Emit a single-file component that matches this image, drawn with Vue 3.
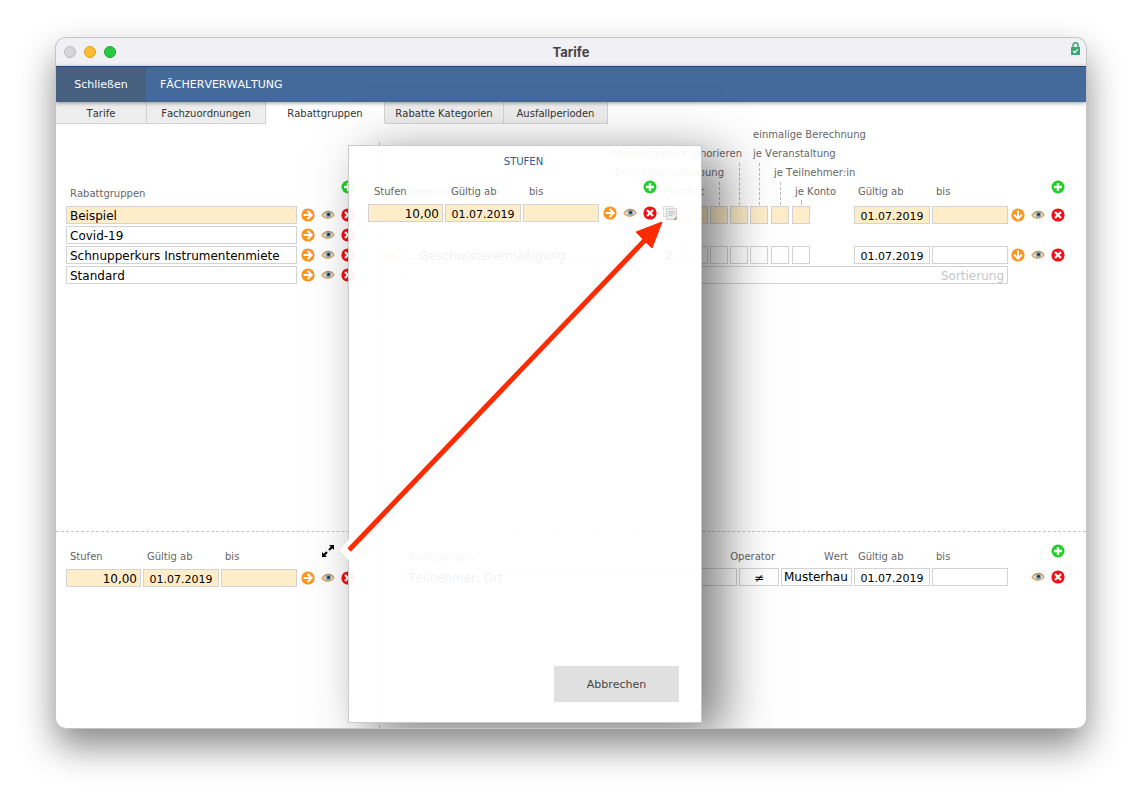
<script setup>
import { ref } from 'vue'

const tabs = [
  { name: 'Tarife', size: 'w-s' },
  { name: 'Fachzuordnungen', size: 'w-l' },
  { name: 'Rabattgruppen', size: 'w-l' },
  { name: 'Rabatte Kategorien', size: 'w-l' },
  { name: 'Ausfallperioden', size: 'w-m' },
]
const active = ref('Rabattgruppen')
const groups = ref(['Beispiel', 'Covid-19', 'Schnupperkurs Instrumentenmiete', 'Standard'])
const flags = ['Ermäßigungskappung', 'Mindestgebühr ignorieren', 'je Veranstaltung', 'je Teilnehmer:in', 'je Konto']
</script>

<template>
  <svg class="sprite" aria-hidden="true">
    <symbol id="i-add" viewBox="0 0 14 14">
      <circle cx="7" cy="7" r="6.5" fill="#1fd126" />
      <path d="M7 3v8M3 7h8" stroke="#fff" stroke-width="2.4" />
    </symbol>
    <symbol id="i-del" viewBox="0 0 14 14">
      <circle cx="7" cy="7" r="6.6" fill="#f30d14" />
      <path d="M4 4l6 6M10 4L4 10" stroke="#fff" stroke-width="2.3" />
    </symbol>
    <symbol id="i-right" viewBox="0 0 14 14">
      <circle cx="7" cy="7" r="6.6" fill="#fb9620" />
      <path d="M2.6 7h7.600M6.600 3L10.600 7L6.600 11" stroke="#fff" stroke-width="2" fill="none" />
    </symbol>
    <symbol id="i-down" viewBox="0 0 14 14">
      <circle cx="7" cy="7" r="6.6" fill="#fb9620" />
      <path d="M7 2.600v7.600M3 6.600L7 10.600L11 6.600" stroke="#fff" stroke-width="2" fill="none" />
    </symbol>
    <symbol id="i-eye" viewBox="0 0 14 14">
      <path d="M1 7.300Q3.500 3.600 7.400 3.600Q11 3.600 13 7Q10.600 10.200 7 10.200Q3.400 10.200 1 7.300Z" fill="#e6dfd2" stroke="#cfa25c" stroke-width="1.200" />
      <circle cx="7.400" cy="6.700" r="2.700" fill="#86a3b5" />
      <circle cx="7.600" cy="6.500" r="1.400" fill="#223140" />
      <path d="M2 5.600Q4.500 3.200 7.400 3.200Q10.500 3.200 12.400 5.600" stroke="#a0895f" stroke-width="0.800" fill="none" />
    </symbol>
    <symbol id="i-copy" viewBox="0 0 14 14">
      <path d="M.5 .5h9.500v10h-9.500z" fill="#f4f4f4" stroke="#dcdcdc" />
      <path d="M3.500 2.500h10v8.500l-2.500 2.500h-7.500z" fill="#ebebeb" stroke="#d3d3d3" />
      <path d="M5.500 5.500h6M5.500 7.500h6M5.500 9.500h4" stroke="#c2c2c2" />
      <path d="M13.700 10.500v3.200h-3.200z" fill="#8b8b8b" />
    </symbol>
    <symbol id="i-expand" viewBox="0 0 14 14">
      <path d="M8 1h5v5zM1 8v5h5z" fill="#000" />
      <path d="M8 6l3-3M6 8l-3 3" stroke="#000" stroke-width="2" />
    </symbol>
    <symbol id="i-folder" viewBox="0 0 14 14">
      <path d="M1 4h4l1 1h6v5H2z" fill="#e6cf4a" />
    </symbol>
  </svg>

  <div class="desk">
  <main class="window">
    <header class="titlebar">
      <div class="lights"><i class="off"></i><i class="min"></i><i class="max"></i></div>
      <h1>Tarife</h1>
      <svg class="lock" viewBox="0 0 9 13" aria-hidden="true">
        <path d="M2 6V3.300a2.500 2.500 0 0 1 5 0V6" fill="none" stroke="#35ab73" stroke-width="1.500" />
        <path d="M0 5h9v8H0z" fill="#35ab73" />
        <path d="M2.200 9l1.600 1.700L6.900 7.200" fill="none" stroke="#fff" stroke-width="1.200" />
      </svg>
    </header>

    <nav class="nav">
      <button class="close" type="button">Schließen</button>
      <a href="#">FÄCHERVERWALTUNG</a>
    </nav>

    <div class="tabs" role="tablist">
      <button
        v-for="t in tabs" :key="t.name" type="button" role="tab"
        :class="[t.size, { on: t.name === active }]" :aria-selected="t.name === active"
        @click="active = t.name"
      >{{ t.name }}</button>
    </div>

    <div class="panes upper">
      <section class="left">
        <div class="head tall group-grid">
          <span class="cap">Rabattgruppen</span><span></span><span></span>
          <button class="ic plus" type="button" aria-label="Neu"><svg><use href="#i-add" /></svg></button>
        </div>
        <div v-for="(g, i) in groups" :key="i" class="row group-grid">
          <input v-model="groups[i]" :class="{ hot: i === 0 }" aria-label="Rabattgruppe">
          <button class="ic" type="button" aria-label="Öffnen"><svg><use href="#i-right" /></svg></button>
          <button class="ic" type="button" aria-label="Ansehen"><svg><use href="#i-eye" /></svg></button>
          <button class="ic" type="button" aria-label="Löschen"><svg><use href="#i-del" /></svg></button>
        </div>
      </section>

      <section class="right">
        <div class="callouts rate-grid">
          <span class="cap l1 at-event">einmalige Berechnung</span>
          <span class="cap l2 to-min">Mindestgebühr ignorieren</span>
          <span class="cap l2 at-event">je Veranstaltung</span>
          <span class="cap l3 to-cap">Ermäßigungskappung</span>
          <span class="cap l3 at-person">je Teilnehmer:in</span>
          <span class="cap l4 at-name">Bezeichnung</span>
          <span class="cap l4 to-prio">Priorität</span>
          <span class="cap l4 at-konto">je Konto</span>
          <span class="cap l4 at-from">Gültig ab</span>
          <span class="cap l4 at-to">bis</span>
          <i class="lead c5 short"></i>
          <i class="lead c6"></i>
          <i class="lead c7"></i>
          <i class="lead c8 short"></i>
          <i class="lead c9 stub"></i>
          <button class="ic l4 at-add plus" type="button" aria-label="Neu"><svg><use href="#i-add" /></svg></button>
        </div>
        <div class="row rate-grid">
          <span></span>
          <input class="hot" value="Geschwister" aria-label="Bezeichnung">
          <input class="hot" aria-label="Priorität">
          <input class="hot" aria-label="Art">
          <input v-for="f in flags" :key="f" class="hot tiny" :aria-label="f">
          <input class="hot date" value="01.07.2019" aria-label="Gültig ab">
          <input class="hot" aria-label="bis">
          <button class="ic" type="button" aria-label="Nach unten"><svg><use href="#i-down" /></svg></button>
          <button class="ic" type="button" aria-label="Ansehen"><svg><use href="#i-eye" /></svg></button>
          <button class="ic" type="button" aria-label="Löschen"><svg><use href="#i-del" /></svg></button>
        </div>
        <div class="row gap"></div>
        <div class="row rate-grid">
          <svg class="folder" aria-hidden="true"><use href="#i-folder" /></svg>
          <input value="...Geschwisterermäßigung" aria-label="Bezeichnung">
          <input value="2" class="mid" aria-label="Priorität">
          <input aria-label="Art">
          <input v-for="f in flags" :key="f" class="tiny" :aria-label="f">
          <input class="date" value="01.07.2019" aria-label="Gültig ab">
          <input aria-label="bis">
          <button class="ic" type="button" aria-label="Nach unten"><svg><use href="#i-down" /></svg></button>
          <button class="ic" type="button" aria-label="Ansehen"><svg><use href="#i-eye" /></svg></button>
          <button class="ic" type="button" aria-label="Löschen"><svg><use href="#i-del" /></svg></button>
        </div>
        <div class="row rate-grid">
          <input class="sort" placeholder="Sortierung" aria-label="Sortierung">
        </div>
      </section>
    </div>

    <div class="panes lower">
      <section class="left">
        <div class="head step-grid">
          <span class="cap">Stufen</span><span class="cap">Gültig ab</span><span class="cap">bis</span><span></span>
          <button class="ic plus" type="button" aria-label="Vergrößern"><svg><use href="#i-expand" /></svg></button>
        </div>
        <div class="row step-grid">
          <input class="hot num" value="10,00" aria-label="Stufe">
          <input class="hot date" value="01.07.2019" aria-label="Gültig ab">
          <input class="hot" aria-label="bis">
          <button class="ic" type="button" aria-label="Öffnen"><svg><use href="#i-right" /></svg></button>
          <button class="ic" type="button" aria-label="Ansehen"><svg><use href="#i-eye" /></svg></button>
          <button class="ic" type="button" aria-label="Löschen"><svg><use href="#i-del" /></svg></button>
        </div>
      </section>

      <section class="right">
        <div class="head cond-grid">
          <span></span><span class="cap">Bedingungen</span><span class="cap end">Operator</span>
          <span class="cap end">Wert</span><span class="cap">Gültig ab</span><span class="cap">bis</span>
          <span></span><span></span>
          <button class="ic plus" type="button" aria-label="Neu"><svg><use href="#i-add" /></svg></button>
        </div>
        <div class="row cond-grid">
          <span></span>
          <input value="Teilnehmer: Ort" aria-label="Bedingung">
          <input class="mid" value="≠" aria-label="Operator">
          <input class="value" value="Musterhau" aria-label="Wert">
          <input class="date" value="01.07.2019" aria-label="Gültig ab">
          <input aria-label="bis">
          <span></span>
          <button class="ic" type="button" aria-label="Ansehen"><svg><use href="#i-eye" /></svg></button>
          <button class="ic" type="button" aria-label="Löschen"><svg><use href="#i-del" /></svg></button>
        </div>
      </section>
    </div>

    <div class="popover" role="dialog" aria-labelledby="steps">
      <h2 id="steps">STUFEN</h2>
      <div class="head step-grid">
        <span class="cap">Stufen</span><span class="cap">Gültig ab</span><span class="cap">bis</span>
        <span></span><span></span>
        <button class="ic plus" type="button" aria-label="Neu"><svg><use href="#i-add" /></svg></button>
      </div>
      <div class="row step-grid">
        <input class="hot num" value="10,00" aria-label="Stufe">
        <input class="hot date" value="01.07.2019" aria-label="Gültig ab">
        <input class="hot" aria-label="bis">
        <button class="ic" type="button" aria-label="Öffnen"><svg><use href="#i-right" /></svg></button>
        <button class="ic" type="button" aria-label="Ansehen"><svg><use href="#i-eye" /></svg></button>
        <button class="ic" type="button" aria-label="Löschen"><svg><use href="#i-del" /></svg></button>
        <button class="ic" type="button" aria-label="Kopieren"><svg><use href="#i-copy" /></svg></button>
      </div>
      <button class="cancel" type="button">Abbrechen</button>
      <svg class="tail" viewBox="0 0 11 22" aria-hidden="true">
        <path d="M11 0L0 11L11 22z" fill="#f8fbf6" />
        <path d="M11 0L0 11L11 22" fill="none" stroke="#e3e6e1" />
      </svg>
      <svg class="arrow" viewBox="0 0 320 332" aria-hidden="true">
        <path d="M1 328L298 17" stroke="#ff2a00" stroke-width="5" />
        <path d="M314 0L288 10L304 26z" fill="#ff2a00" stroke="#ff2a00" />
      </svg>
    </div>
  </main>
  </div>
</template>

<style>
body {
  background: #fff;
}
</style>

<style scoped>
.sprite {
  position: absolute;
  width: 0;
  height: 0;
}
.desk {
  display: flex;
  box-sizing: border-box;
  min-height: 100vh;
  padding: 38px 56px 74px;
}
.window {
  position: relative;
  flex: 1;
  min-width: 0;
  display: flex;
  flex-direction: column;
  overflow: hidden;
  border-radius: 10px;
  background: #fff;
  box-shadow: 0 0 0 1px #c4c4c4, 0 18px 36px rgba(0, 0, 0, 0.48);
  font: 10px/19px "DejaVu Sans", Verdana, sans-serif;
  font-kerning: none;
  color: #555;
}
button, input {
  box-sizing: border-box;
  min-width: 0;
  border: 0;
  padding: 0;
  background: none;
  color: inherit;
  font: inherit;
  font-kerning: none;
}
.titlebar {
  display: grid;
  grid-template-columns: 1fr auto 1fr;
  align-items: center;
  height: 28px;
  background: #f1f0f5;
}
.lights {
  display: flex;
  gap: 8px;
  padding-left: 8px;
}
.lights i {
  box-sizing: border-box;
  width: 12px;
  height: 12px;
  border: 1px solid #bcbbc0;
  border-radius: 50%;
  background: #d6d5da;
}
.lights .min {
  border-color: #e09f24;
  background: #febc2e;
}
.lights .max {
  border-color: #1fa82f;
  background: #28c840;
}
h1 {
  margin: 0;
  font: 700 13px/16px Inter, sans-serif;
  color: #454447;
}
.lock {
  justify-self: end;
  align-self: start;
  width: 9px;
  height: 13px;
  margin: 4px 6px 0 0;
}
.nav {
  position: relative;
  z-index: 1;
  display: flex;
  height: 36px;
  box-sizing: border-box;
  border-top: 1px solid #1f4674;
  background: #44699b;
  box-shadow: 0 1px 4px rgba(0, 0, 0, 0.4);
  font-size: 11px;
  line-height: 35px;
  color: #fff;
}
.close {
  width: 90px;
  background: #48607f;
}
.nav a {
  padding-left: 14px;
  color: inherit;
  text-decoration: none;
}
.tabs {
  display: flex;
  height: 22px;
}
.tabs button {
  padding-top: 2px;
  border: solid #d3d3d3;
  border-width: 0 1px 1px 0;
  background: #ededed;
  color: #333;
}
.tabs .on {
  border-bottom-color: #fff;
  background: #fff;
}
.tabs .w-s { width: 91px; }
.tabs .w-m { width: 104px; }
.tabs .w-l { width: 119px; }

.panes {
  display: flex;
}
.upper {
  flex: 1;
}
.lower {
  height: 197px;
  box-sizing: border-box;
  border-top: 1px dashed #c4c4c4;
}
.left {
  width: 323px;
  flex: none;
  padding-left: 10px;
  box-sizing: border-box;
}
.right {
  flex: 1;
  min-width: 0;
  padding-right: 18px;
  border-left: 1px dashed #c4c4c4;
}
.upper .left {
  padding-top: 58px;
}
.upper .right {
  margin-top: 18px;
}
.lower .left, .lower .right {
  padding-top: 15px;
}
.group-grid, .step-grid, .rate-grid, .cond-grid {
  display: grid;
  column-gap: 2px;
}
.group-grid {
  grid-template-columns: 231px repeat(3, 18px);
}
.step-grid {
  grid-template-columns: 75px 76px 76px repeat(4, 18px);
}
.rate-grid {
  grid-template-columns: 22px 1fr 24px 25px 18px 18px 19px 19px 60px 76px 76px repeat(3, 18px);
}
.cond-grid {
  grid-template-columns: 22px 1fr 40px 71px 76px 76px repeat(3, 18px);
}
.head {
  height: 24px;
}
.lower .head {
  height: 22px;
}
.lower .right .head {
  height: 21px;
}
.tall .cap {
  padding-top: 2px;
}
.cap {
  padding-left: 4px;
  white-space: nowrap;
  color: #666;
}
.end {
  justify-self: end;
  padding: 0 4px 0 0;
}
.row {
  height: 18px;
  margin-bottom: 2px;
}
input {
  width: 100%;
  height: 18px;
  border: 1px solid #d3d3d3;
  padding: 1px 3px 0;
  background: #fff;
  font-size: 12px;
  line-height: 16px;
  color: #000;
}
.hot {
  background: #ffedca;
}
.num {
  text-align: right;
}
.date, .mid {
  padding: 2px 0 0;
  text-align: center;
}
.date {
  font-size: 11px;
}
.value {
  padding: 0 2px 1px;
}
.tiny {
  width: 18px;
}
.sort {
  grid-column: 2 / 12;
  text-align: right;
}
.sort::placeholder {
  color: #c6c6c6;
  opacity: 1;
}
.ic {
  display: flex;
  align-items: center;
  justify-content: center;
  height: 18px;
}
.right .ic {
  padding-right: 2px;
}
.ic svg {
  width: 14px;
  height: 14px;
  flex: none;
}
.plus {
  margin-top: -5px;
}
.tall .plus, .callouts .plus {
  margin-top: -4px;
}
.folder {
  width: 14px;
  height: 14px;
  margin: 3px 0 0 5px;
}
.callouts {
  grid-template-rows: 19px 19px 19px 24px;
  margin-top: -17px;
}
.l1 { grid-row: 1; }
.l2 { grid-row: 2; }
.l3 { grid-row: 3; }
.l4 { grid-row: 4; }
.at-name { grid-column: 2; }
.at-event { grid-column: 7 / 12; }
.at-person { grid-column: 8 / 12; }
.at-konto { grid-column: 9; }
.at-from { grid-column: 10; }
.at-to { grid-column: 11; }
.at-add { grid-column: 14; }
.at-event, .at-person, .at-konto {
  padding-left: 3px;
}
.to-min { grid-column: 2 / 7; }
.to-cap { grid-column: 2 / 6; }
.to-prio { grid-column: 2 / 5; }
.to-min, .to-cap, .to-prio {
  justify-self: end;
  padding-right: 4px;
}
.to-min {
  padding-right: 6px;
}
.lead {
  grid-row: 3 / 5;
  width: 0;
  margin: 0 0 1px 9px;
  border-left: 1px dashed #b9b9b9;
}
.short { grid-row: 4; }
.stub {
  grid-row: 4;
  margin-top: 18px;
}
.c5 { grid-column: 5; }
.c6 { grid-column: 6; }
.c7 { grid-column: 7; }
.c8 { grid-column: 8; }
.c9 { grid-column: 9; }

.popover {
  position: absolute;
  z-index: 2;
  top: 107px;
  bottom: 5px;
  left: 292px;
  display: flex;
  flex-direction: column;
  box-sizing: border-box;
  width: 354px;
  padding: 6px 22px 20px 19px;
  border: 1px solid #c9c9c9;
  background: rgba(255, 255, 255, 0.94);
  box-shadow: 20px 12px 48px rgba(0, 0, 0, 0.52);
}
h2 {
  margin: 0 0 11px;
  font-size: 10px;
  font-weight: 400;
  line-height: 19px;
  text-align: center;
  color: #2a6096;
}
.popover .head {
  height: 22px;
}
.popover .cap {
  padding-left: 6px;
}
.popover .plus {
  margin-top: -4px;
}
.cancel {
  align-self: flex-end;
  width: 125px;
  height: 36px;
  margin-top: auto;
  background: #e0e0e0;
  font-size: 11px;
  color: #444;
}
.tail {
  position: absolute;
  top: 393px;
  left: -11px;
  width: 11px;
  height: 22px;
}
.arrow {
  position: absolute;
  top: 76px;
  left: -1px;
  width: 320px;
  height: 332px;
  pointer-events: none;
}
</style>
